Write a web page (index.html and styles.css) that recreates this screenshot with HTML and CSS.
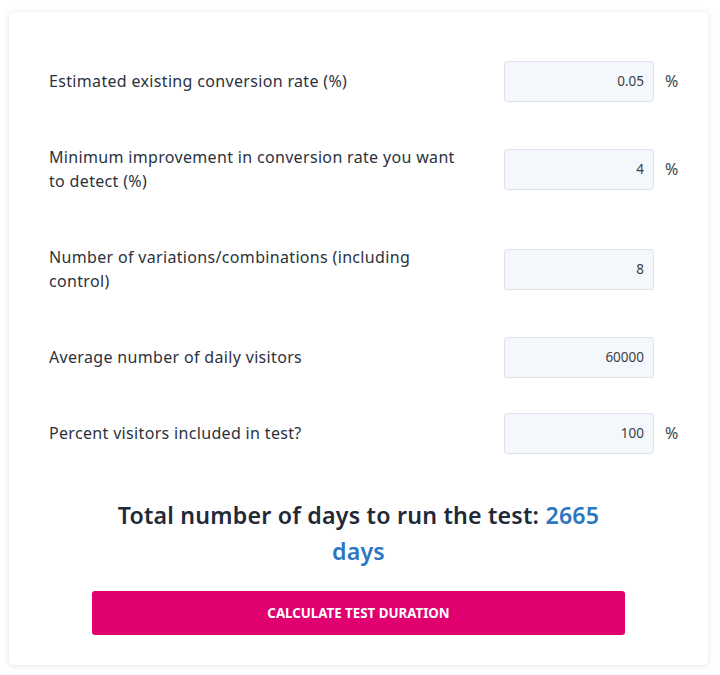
FILE: index.html
```html
<!DOCTYPE html>
<html lang="en">
<head>
<meta charset="utf-8">
<title>Test Duration Calculator</title>
<link rel="stylesheet" href="styles.css">
</head>
<body>
<main class="card">
  <form class="form" onsubmit="return false">
    <div class="row">
      <label class="label" for="f1">Estimated existing conversion rate (%)</label>
      <input class="input" id="f1" type="text" value="0.05">
      <span class="unit">%</span>
    </div>
    <div class="row">
      <label class="label" for="f2">Minimum improvement in conversion rate you want to detect (%)</label>
      <input class="input" id="f2" type="text" value="4">
      <span class="unit">%</span>
    </div>
    <div class="row">
      <label class="label" for="f3">Number of variations/combinations (including control)</label>
      <input class="input" id="f3" type="text" value="8">
      <span class="unit"></span>
    </div>
    <div class="row">
      <label class="label" for="f4">Average number of daily visitors</label>
      <input class="input" id="f4" type="text" value="60000">
      <span class="unit"></span>
    </div>
    <div class="row">
      <label class="label" for="f5">Percent visitors included in test?</label>
      <input class="input" id="f5" type="text" value="100">
      <span class="unit">%</span>
    </div>
  </form>
  <div class="result">
    <p class="result-text">Total number of days to run the test: <span class="result-value">2665</span> <span class="result-value">days</span></p>
    <button class="btn" type="button">CALCULATE TEST DURATION</button>
  </div>
</main>
</body>
</html>
```

FILE: styles.css
```css
html, body {
  margin: 0;
  padding: 0;
  background: #ffffff;
}
body {
  font-family: "Noto Sans", "Open Sans", sans-serif;
  color: #2b323d;
  padding: 12px 12px 8px 9px;
}
.card {
  width: 699px;
  box-sizing: border-box;
  background: #ffffff;
  border-radius: 4px;
  box-shadow: 0 1px 6px rgba(20, 30, 50, 0.10), 0 0 2px rgba(20, 30, 50, 0.05);
  padding: 31px 0 30px 40px;
}
.form {
  display: flex;
  flex-direction: column;
}
.row {
  display: grid;
  grid-template-columns: 412px 43px 150px 40px;
  align-items: center;
  padding: 26px 0;
}
.label {
  grid-column: 1;
  font-size: 16px;
  line-height: 24px;
  letter-spacing: 0.33px;
  color: #2b323d;
}
.input {
  grid-column: 3;
  box-sizing: border-box;
  width: 150px;
  height: 41px;
  margin: -9px 0;
  border: 1px solid #dfe3e9;
  border-radius: 3px;
  background: #f4f7fb;
  text-align: right;
  padding: 0 9px;
  font-family: "Noto Sans", "Open Sans", sans-serif;
  font-size: 13.5px;
  color: #3a3f47;
}
.unit {
  grid-column: 4;
  padding-left: 11px;
  font-size: 16px;
  color: #3a3f47;
}
.result {
  width: 533px;
  margin: 26px 0 0 43px;
  display: flex;
  flex-direction: column;
  align-items: center;
  gap: 22px;
}
.result-text {
  margin: 0;
  text-align: center;
  font-size: 23.2px;
  line-height: 36px;
  font-weight: 600;
  color: #1f2937;
  letter-spacing: 0.2px;
}
.result-value {
  color: #2b76c2;
}
.btn {
  width: 533px;
  height: 44px;
  border: none;
  border-radius: 3px;
  background: #e0006f;
  color: #ffffff;
  font-family: "Noto Sans", "Open Sans", sans-serif;
  font-size: 13.3px;
  font-weight: 700;
  letter-spacing: 0;
  cursor: pointer;
}
```
